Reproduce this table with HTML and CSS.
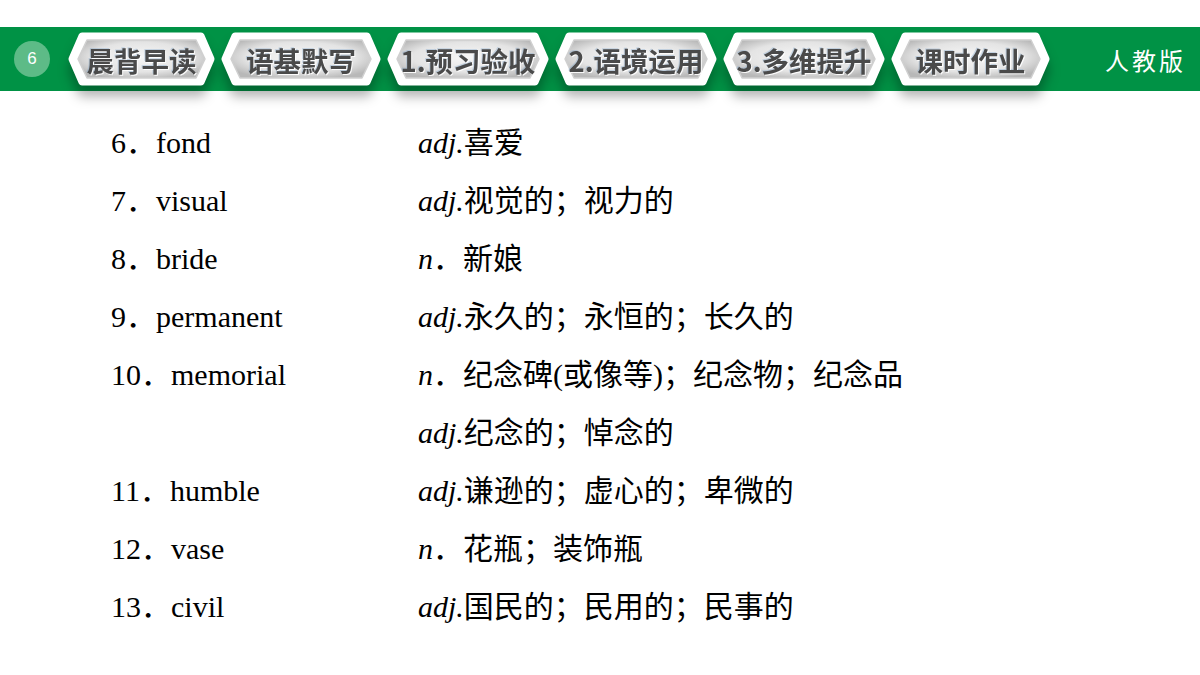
FILE: index.html
```html
<!DOCTYPE html>
<html lang="zh-CN">
<head>
<meta charset="utf-8">
<link rel="stylesheet" href="styles.css">
</head>
<body>
<header class="bar">
  <div class="page-no">6</div>
  <nav class="tabs">
    <div class="tab w147">
      <svg class="tab-bg" width="147" height="54" viewBox="0 0 147 54"><defs><radialGradient id="g1" cx="50%" cy="45%" r="60%"><stop offset="0" stop-color="#f7f7f7"/><stop offset="0.65" stop-color="#e4e4e4"/><stop offset="1" stop-color="#b8b8b8"/></radialGradient></defs><polygon points="4,27 14,4 133,4 143,27 133,50 14,50" fill="#fff" stroke="#fff" stroke-width="7" stroke-linejoin="round"/><polygon points="10,27 19,8 128,8 137,27 128,46 19,46" fill="url(#g1)" stroke="#d0d0d0" stroke-width="1.5" stroke-linejoin="round"/></svg>
      <span class="label">晨背早读</span>
    </div>
    <div class="tab w160">
      <svg class="tab-bg" width="160" height="54" viewBox="0 0 160 54"><defs><radialGradient id="g2" cx="50%" cy="45%" r="60%"><stop offset="0" stop-color="#f7f7f7"/><stop offset="0.65" stop-color="#e4e4e4"/><stop offset="1" stop-color="#b8b8b8"/></radialGradient></defs><polygon points="4,27 14,4 146,4 156,27 146,50 14,50" fill="#fff" stroke="#fff" stroke-width="7" stroke-linejoin="round"/><polygon points="10,27 19,8 141,8 150,27 141,46 19,46" fill="url(#g2)" stroke="#d0d0d0" stroke-width="1.5" stroke-linejoin="round"/></svg>
      <span class="label">语基默写</span>
    </div>
    <div class="tab w162">
      <svg class="tab-bg" width="162" height="54" viewBox="0 0 162 54"><defs><radialGradient id="g3" cx="50%" cy="45%" r="60%"><stop offset="0" stop-color="#f7f7f7"/><stop offset="0.65" stop-color="#e4e4e4"/><stop offset="1" stop-color="#b8b8b8"/></radialGradient></defs><polygon points="4,27 14,4 148,4 158,27 148,50 14,50" fill="#fff" stroke="#fff" stroke-width="7" stroke-linejoin="round"/><polygon points="10,27 19,8 143,8 152,27 143,46 19,46" fill="url(#g3)" stroke="#d0d0d0" stroke-width="1.5" stroke-linejoin="round"/></svg>
      <span class="label">1.预习验收</span>
    </div>
    <div class="tab w162">
      <svg class="tab-bg" width="162" height="54" viewBox="0 0 162 54"><defs><radialGradient id="g4" cx="50%" cy="45%" r="60%"><stop offset="0" stop-color="#f7f7f7"/><stop offset="0.65" stop-color="#e4e4e4"/><stop offset="1" stop-color="#b8b8b8"/></radialGradient></defs><polygon points="4,27 14,4 148,4 158,27 148,50 14,50" fill="#fff" stroke="#fff" stroke-width="7" stroke-linejoin="round"/><polygon points="10,27 19,8 143,8 152,27 143,46 19,46" fill="url(#g4)" stroke="#d0d0d0" stroke-width="1.5" stroke-linejoin="round"/></svg>
      <span class="label">2.语境运用</span>
    </div>
    <div class="tab w162">
      <svg class="tab-bg" width="162" height="54" viewBox="0 0 162 54"><defs><radialGradient id="g5" cx="50%" cy="45%" r="60%"><stop offset="0" stop-color="#f7f7f7"/><stop offset="0.65" stop-color="#e4e4e4"/><stop offset="1" stop-color="#b8b8b8"/></radialGradient></defs><polygon points="4,27 14,4 148,4 158,27 148,50 14,50" fill="#fff" stroke="#fff" stroke-width="7" stroke-linejoin="round"/><polygon points="10,27 19,8 143,8 152,27 143,46 19,46" fill="url(#g5)" stroke="#d0d0d0" stroke-width="1.5" stroke-linejoin="round"/></svg>
      <span class="label">3.多维提升</span>
    </div>
    <div class="tab w159">
      <svg class="tab-bg" width="159" height="54" viewBox="0 0 159 54"><defs><radialGradient id="g6" cx="50%" cy="45%" r="60%"><stop offset="0" stop-color="#f7f7f7"/><stop offset="0.65" stop-color="#e4e4e4"/><stop offset="1" stop-color="#b8b8b8"/></radialGradient></defs><polygon points="4,27 14,4 145,4 155,27 145,50 14,50" fill="#fff" stroke="#fff" stroke-width="7" stroke-linejoin="round"/><polygon points="10,27 19,8 140,8 149,27 140,46 19,46" fill="url(#g6)" stroke="#d0d0d0" stroke-width="1.5" stroke-linejoin="round"/></svg>
      <span class="label">课时作业</span>
    </div>
  </nav>
  <div class="edition">人教版</div>
</header>

<main class="words">
  <div class="term">6．fond</div>
  <div class="def"><i>adj.</i>喜爱</div>

  <div class="term">7．visual</div>
  <div class="def"><i>adj.</i>视觉的；视力的</div>

  <div class="term">8．bride</div>
  <div class="def"><i>n</i>．新娘</div>

  <div class="term">9．permanent</div>
  <div class="def"><i>adj.</i>永久的；永恒的；长久的</div>

  <div class="term">10．memorial</div>
  <div class="def"><i>n</i>．纪念碑(或像等)；纪念物；纪念品</div>

  <div class="term"></div>
  <div class="def"><i>adj.</i>纪念的；悼念的</div>

  <div class="term">11．humble</div>
  <div class="def"><i>adj.</i>谦逊的；虚心的；卑微的</div>

  <div class="term">12．vase</div>
  <div class="def"><i>n</i>．花瓶；装饰瓶</div>

  <div class="term">13．civil</div>
  <div class="def"><i>adj.</i>国民的；民用的；民事的</div>
</main>
</body>
</html>
```

FILE: styles.css
```css
html, body {
  margin: 0;
  padding: 0;
  background: #ffffff;
}

body {
  width: 1200px;
  height: 675px;
  overflow: hidden;
}

.bar {
  margin-top: 27px;
  height: 64px;
  background: #009245;
  display: flex;
  align-items: center;
  padding-left: 14px;
  padding-right: 14px;
  box-sizing: border-box;
}

.page-no {
  width: 36px;
  height: 36px;
  border-radius: 50%;
  background: #5dbb87;
  color: #ffffff;
  font-family: "Liberation Sans", Arial, sans-serif;
  font-size: 17px;
  display: flex;
  align-items: center;
  justify-content: center;
  flex: none;
}

.tabs {
  display: flex;
  align-items: center;
  margin-left: 18px;
  gap: 6px;
}

.tab {
  position: relative;
  height: 54px;
  display: flex;
  align-items: center;
  justify-content: center;
  filter: drop-shadow(0 11px 6px rgba(0, 0, 0, 0.3));
  flex: none;
}

.w147 { width: 147px; }
.w160 { width: 160px; }
.w162 { width: 162px; }
.w159 { width: 159px; }

.tab-bg {
  position: absolute;
  left: 0;
  top: 0;
}

.label {
  position: relative;
  font-family: "Noto Sans CJK SC", "Liberation Sans", sans-serif;
  font-weight: 700;
  font-size: 27.5px;
  line-height: 1;
  color: #4a4a4a;
  text-shadow: 1px 1px 0 rgba(255, 255, 255, 0.9), -1px -1px 0 rgba(120, 160, 200, 0.35);
  margin-top: 3px;
}

.edition {
  margin-left: auto;
  color: #ffffff;
  font-family: "Noto Sans CJK SC", serif;
  font-size: 24px;
  letter-spacing: 3px;
}

.words {
  display: grid;
  grid-template-columns: 307px auto;
  grid-auto-rows: 58px;
  padding-left: 111px;
  margin-top: 23px;
  font-family: "Liberation Serif", "Times New Roman", "Noto Sans CJK SC", serif;
  font-size: 30px;
  line-height: 58px;
  color: #000000;
}

.term, .def {
  white-space: nowrap;
}

.def i {
  font-family: "Liberation Serif", serif;
  font-style: italic;
}
```
